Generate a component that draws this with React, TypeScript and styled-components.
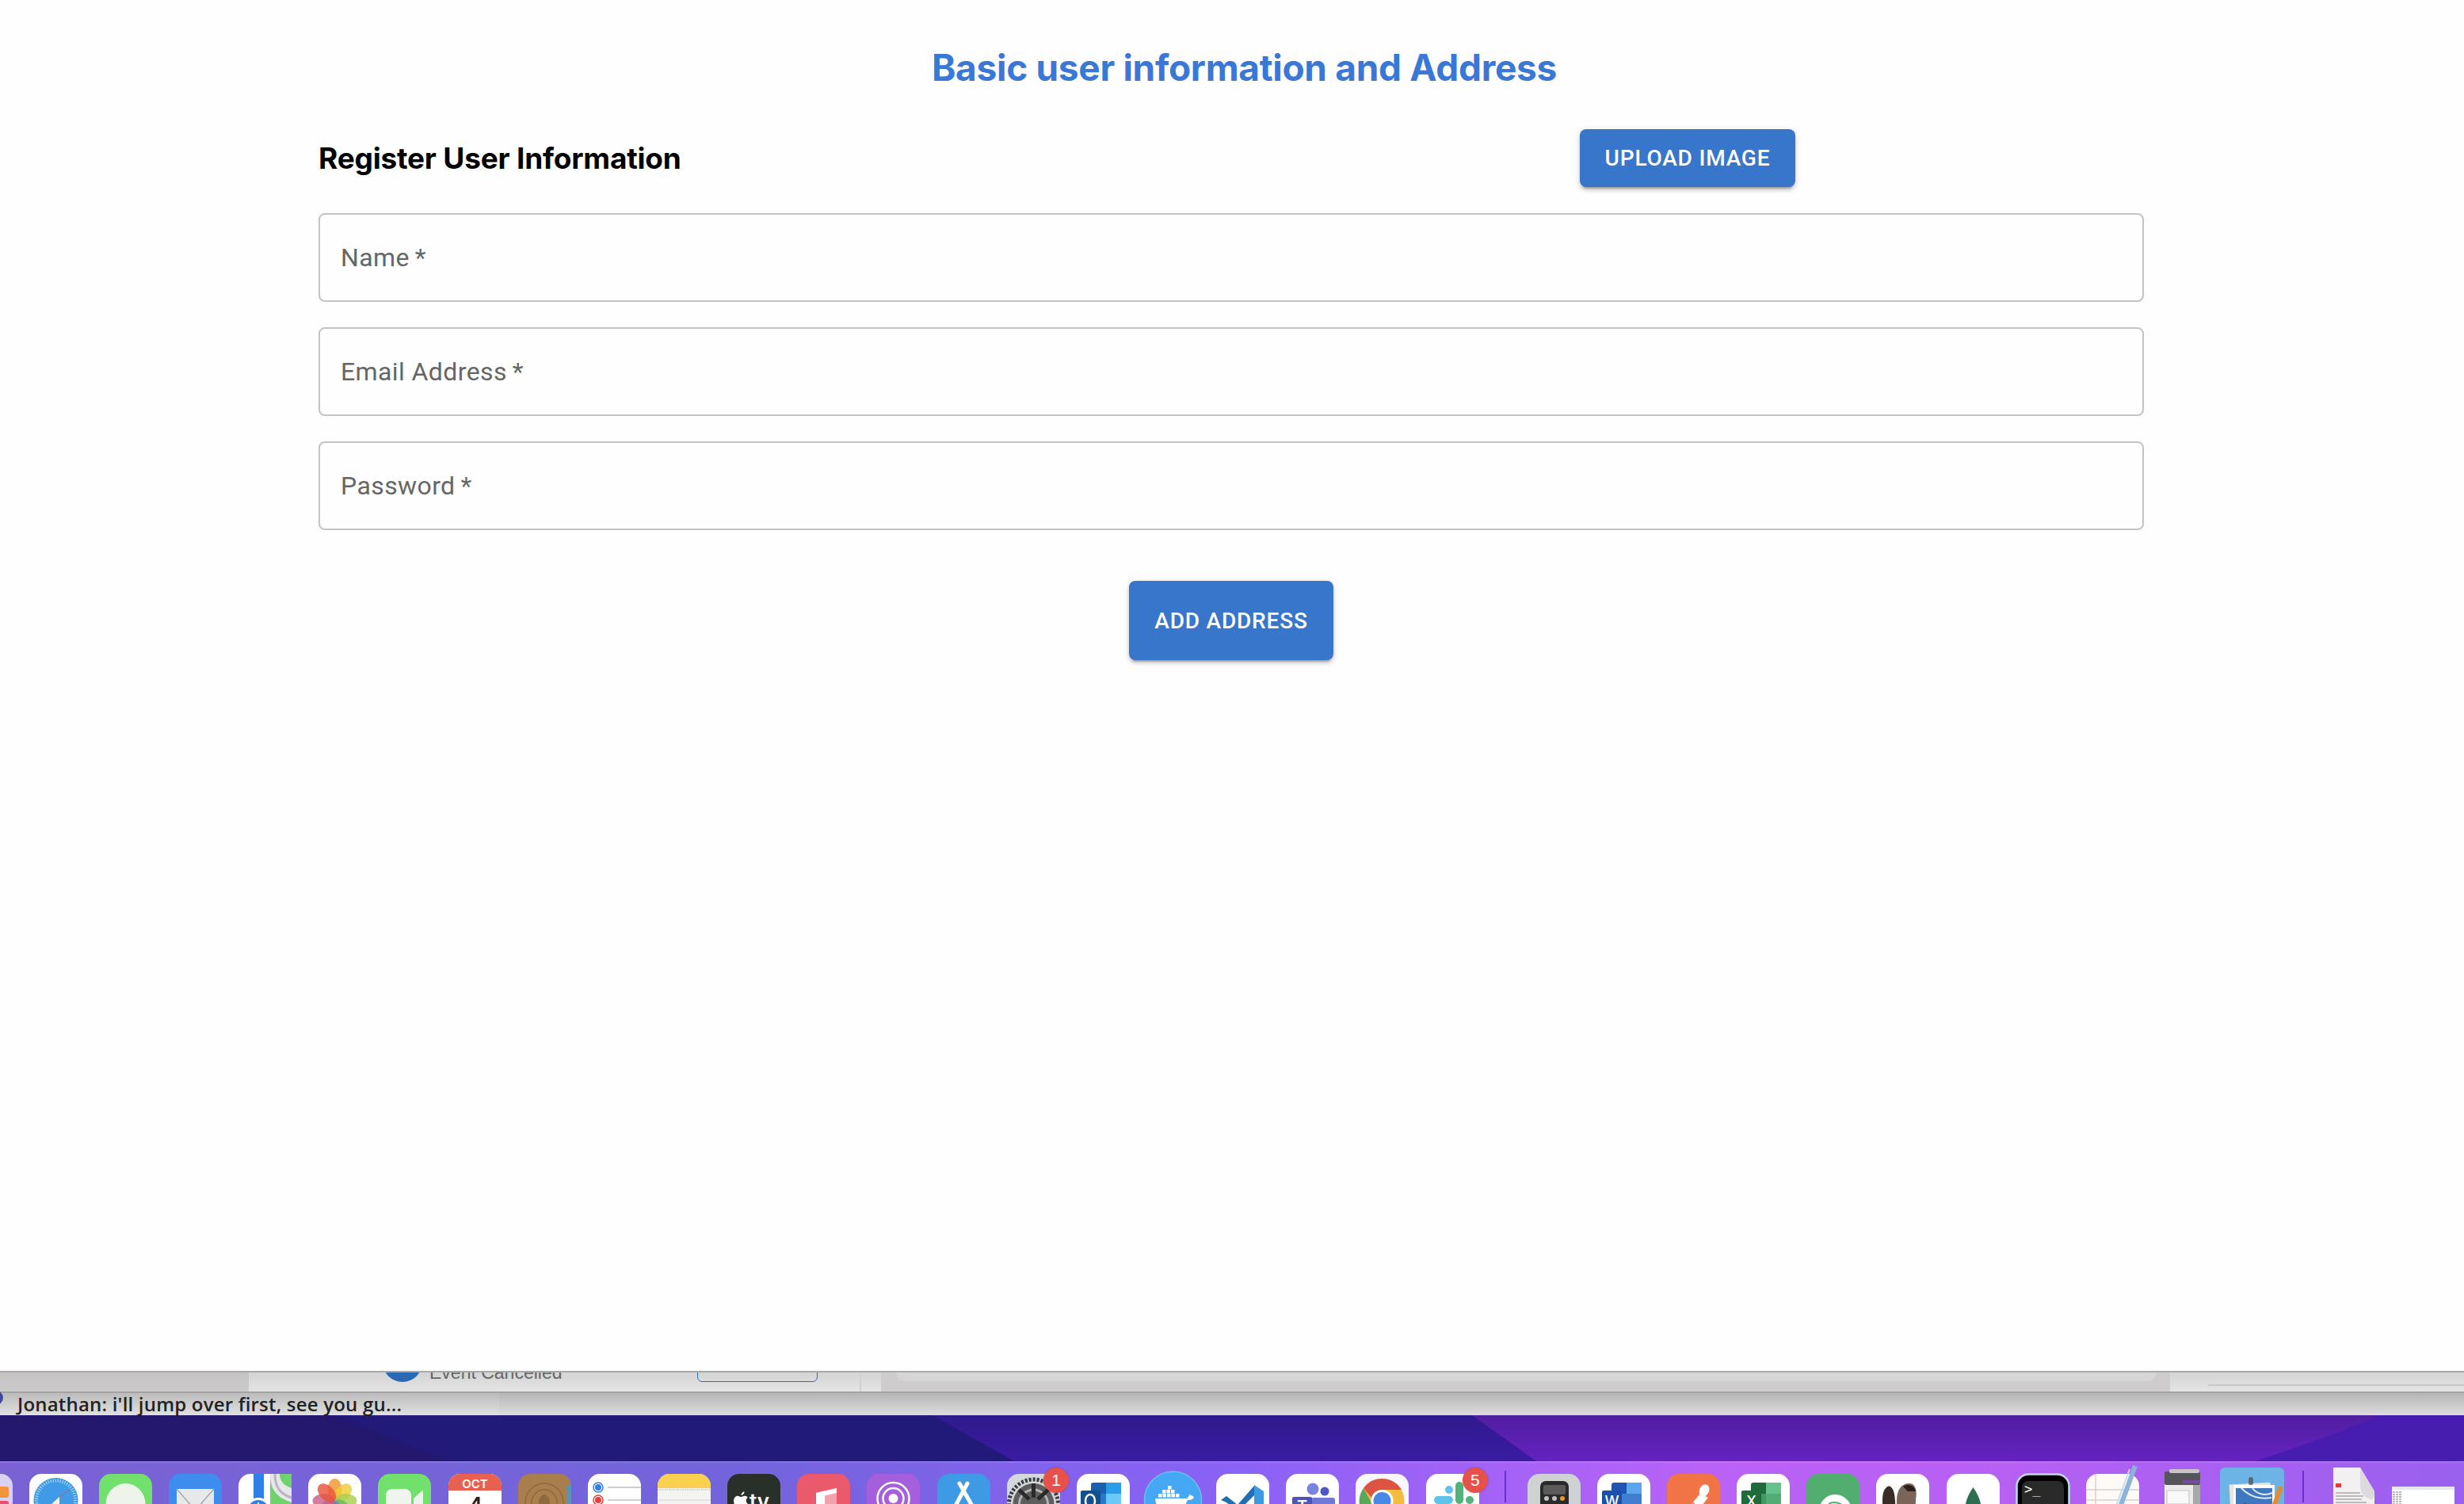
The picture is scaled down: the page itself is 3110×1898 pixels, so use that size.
import React from 'react'
import styled, { createGlobalStyle } from 'styled-components'

const GlobalStyle = createGlobalStyle`
  html, body {
    margin: 0;
    padding: 0;
    background: #fff;
  }
  * {
    box-sizing: border-box;
  }
`

const Page = styled.div`
  width: 3110px;
  height: 1898px;
  overflow: hidden;
  display: flex;
  flex-direction: column;
`

const Main = styled.main`
  height: 1730px;
  flex: none;
  background: #fefefe;
  padding: 57px 404px 0 402px;
`

const Title = styled.h1`
  margin: 0 0 50px;
  padding-left: 33px;
  font: 700 46px/56px Inter, sans-serif;
  letter-spacing: -0.3px;
  color: #3a78d8;
  text-align: center;
`

const HeaderRow = styled.div`
  display: grid;
  grid-template-columns: 1fr 1fr;
  align-items: center;
  margin-bottom: 33px;
`

const SubTitle = styled.h2`
  margin: 0;
  font: 700 37px/44px Inter, sans-serif;
  letter-spacing: -0.2px;
  color: #000;
`

const Button = styled.button<{ $tall?: boolean }>`
  justify-self: center;
  height: ${(p) => (p.$tall ? '100px' : '73px')};
  padding: 0 32px;
  border: 0;
  border-radius: 8px;
  background: #3876cb;
  color: #fff;
  font: 500 28px Roboto, sans-serif;
  letter-spacing: 0.8px;
  text-transform: uppercase;
  box-shadow: 0 6px 2px -4px rgba(0, 0, 0, 0.2), 0 4px 4px 0 rgba(0, 0, 0, 0.14), 0 2px 10px 0 rgba(0, 0, 0, 0.12);
`

const Fields = styled.div`
  display: flex;
  flex-direction: column;
  gap: 32px;
`

const Input = styled.input`
  width: 100%;
  height: 112px;
  padding: 0 26px;
  border: 2px solid #c4c4c4;
  border-radius: 8px;
  background: transparent;
  font: 400 32px Roboto, sans-serif;
  letter-spacing: 0.4px;
  outline: none;

  &::placeholder {
    color: #666;
    opacity: 1;
  }
`

const Actions = styled.div`
  display: flex;
  justify-content: center;
  margin-top: 64px;
`

// what's left of the windows behind the browser
const WindowStrip = styled.div`
  height: 28px;
  flex: none;
  display: flex;
  overflow: hidden;
  border-top: 2px solid #a9a9a9;
  border-bottom: 2px solid #a3a3a3;
`

const StripSide = styled.div`
  width: 314px;
  background: linear-gradient(#c5c2c4, #cdcacc);
`

const EventPane = styled.div`
  position: relative;
  width: 773px;
  background: linear-gradient(#d4d4d4, #e4e4e4);
  border-right: 2px solid #d0d0d0;
`

const EventGutter = styled.div`
  width: 25px;
  background: linear-gradient(#d4d4d4, #e4e4e4);
`

const EventAvatar = styled.span`
  position: absolute;
  left: 169px;
  top: -38px;
  width: 50px;
  height: 50px;
  border-radius: 50%;
  background: #2a6ab5;
`

const EventText = styled.span`
  position: absolute;
  left: 228px;
  top: -15px;
  font: 400 23px/30px 'Liberation Sans', sans-serif;
  color: #666;
`

const EventButton = styled.span`
  position: absolute;
  left: 566px;
  top: -20px;
  width: 152px;
  height: 32px;
  border: 1.5px solid #2f6db5;
  border-radius: 6px;
`

const ListPane = styled.div`
  flex: 1;
  padding: 0 17px 0 19px;
  background: #cfccce;
`

const ListCard = styled.div`
  height: 11px;
  background: #d6d6d6;
  border-radius: 0 0 14px 14px;
`

const DetailPane = styled.div`
  width: 371px;
  padding: 15px 0 0 48px;
  background: linear-gradient(#d4d4d4, #e4e4e4);
`

const DetailLine = styled.div`
  height: 2px;
  background: #c6c6c6;
`

const ChatBar = styled.div`
  position: relative;
  height: 28px;
  flex: none;
  background: linear-gradient(#b6b6b6, #dcdcdc);
`

const ChatMessage = styled.div`
  width: 630px;
  height: 100%;
  padding-left: 22px;
  font: 600 24px/27px 'Open Sans', sans-serif;
  letter-spacing: 0.2px;
  color: #222;
  white-space: nowrap;
  background: linear-gradient(#bcbcbc, #e0e0e0);
`

const ChatAvatar = styled.span`
  position: absolute;
  left: -14px;
  top: -3px;
  width: 18px;
  height: 18px;
  border-radius: 50%;
  background: #3f4a9c;
`

const Wallpaper = styled.svg`
  display: block;
  flex: none;
  width: 3110px;
  height: 58px;
`

const Dock = styled.div`
  height: 54px;
  flex: none;
  display: flex;
  align-items: flex-start;
  padding-top: 14px;
  border-top: 2px solid rgba(255, 255, 255, 0.12);
  background: linear-gradient(90deg, #7a62d4 0%, #7364dc 30%, #8a62f6 50%, #bb62f6 70%, #b860f4 80%, #9a60ee 100%);
`

const DockCell = styled.div<{ $first?: boolean }>`
  position: relative;
  flex: none;
  width: 88.15px;
  margin-left: ${(p) => (p.$first ? '-62px' : '0')};
  display: flex;
  justify-content: center;
`

const Art = styled.svg`
  display: block;
  flex: none;
  width: 67px;
  height: 67px;
  overflow: visible;
`

const Badge = styled.span`
  position: absolute;
  left: 57px;
  top: -8px;
  width: 32px;
  height: 32px;
  border-radius: 50%;
  background: #e8504a;
  box-shadow: 0 0 2px rgba(0, 0, 0, 0.3);
  color: #fff;
  font: 400 21px/32px 'Liberation Sans', sans-serif;
  text-align: center;
`

const Separator = styled.div<{ $shift?: number }>`
  flex: none;
  width: 40px;
  height: 40px;
  margin-top: -4px;
  padding-left: ${(p) => p.$shift ?? 0}px;
  display: flex;
  justify-content: center;

  &::after {
    content: '';
    width: 2px;
    background: #6a2fd0;
  }
`

const Tile = ({ fill, children }: { fill: string; children?: React.ReactNode }) => (
  <Art viewBox="0 0 67 67">
    <rect width="67" height="67" rx="15" fill={fill} />
    {children}
  </Art>
)

const Launchpad = () => (
  <Tile fill="#d9d0f2">
    <rect x="48" y="16" width="14" height="14" rx="3" fill="#f0953c" />
    <rect x="48" y="34" width="14" height="14" rx="3" fill="#e8506e" />
  </Tile>
)

const Safari = () => (
  <Tile fill="#fff">
    <circle cx="33.5" cy="33" r="28" fill="#3f9be8" />
    <circle cx="33.5" cy="33" r="24.5" fill="none" stroke="#bfe0f8" strokeWidth="4" strokeDasharray="1 2" />
    <polygon points="60,13 38,29 29,37" fill="#e5503c" />
    <polygon points="38,29 29,37 18,52 38,38" fill="#f2f2f2" />
  </Tile>
)

const Messages = () => (
  <Tile fill="#72e06d">
    <ellipse cx="33.5" cy="38" rx="25" ry="26" fill="#eef4ea" />
  </Tile>
)

const Mail = () => (
  <Tile fill="#3f8cef">
    <rect x="10" y="19" width="47" height="35" fill="#e6e8ea" />
    <path d="M10 19 L33.5 46 L57 19 M10 54 L27 38 M57 54 L40 38" fill="none" stroke="#a8a8a8" strokeWidth="1.5" />
  </Tile>
)

const Maps = () => (
  <Tile fill="#fff">
    <path d="M40 0 H67 V67 H40 Z" fill="#6fd36c" />
    <path d="M40 0 C40 22 50 30 67 36 V18 C56 14 52 8 52 0 Z" fill="#e8e6ea" />
    <path d="M46 0 C46 18 54 26 67 30" fill="none" stroke="#b9b6c0" strokeWidth="3" />
    <path d="M0 40 H20 V67 H0 Z" fill="#dc98d8" />
    <rect x="19" y="0" width="13" height="36" fill="#2f7fe8" />
    <circle cx="25" cy="46" r="16" fill="#fff" />
    <circle cx="25" cy="46" r="13" fill="#2f7fe8" />
    <polygon points="25,35 33,52 25,48 17,52" fill="#fff" />
  </Tile>
)

const petals = [
  { a: 0, c: '#f0962e' },
  { a: 45, c: '#f0cc3a' },
  { a: 90, c: '#a8cf4c' },
  { a: 135, c: '#6cb86a' },
  { a: 180, c: '#5a8fc4' },
  { a: 225, c: '#8f6cb8' },
  { a: 270, c: '#c9608a' },
  { a: 315, c: '#e8563c' },
]

const Photos = () => (
  <Tile fill="#fff">
    {petals.map((p) => (
      <ellipse
        key={p.a}
        cx="33.5"
        cy="20"
        rx="9"
        ry="14"
        fill={p.c}
        opacity="0.82"
        transform={`rotate(${p.a} 33.5 34)`}
      />
    ))}
  </Tile>
)

const FaceTime = () => (
  <Tile fill="#72e06d">
    <rect x="10" y="19" width="32" height="32" rx="8" fill="#f0f4ee" />
    <polygon points="45,31 57,20 57,50 45,40" fill="#f0f4ee" />
  </Tile>
)

const Calendar = () => (
  <Tile fill="#fff">
    <path d="M0 21 V15 A15 15 0 0 1 15 0 H52 A15 15 0 0 1 67 15 V21 Z" fill="#e8604f" />
    <text x="33.5" y="18" textAnchor="middle" fill="#fff" fontFamily="Inter, sans-serif" fontWeight="600" fontSize="15">
      OCT
    </text>
    <text x="33.5" y="55" textAnchor="middle" fill="#222" fontFamily="Inter, sans-serif" fontSize="36">
      4
    </text>
  </Tile>
)

const Contacts = () => (
  <Tile fill="#a87f4c">
    <rect x="62" y="14" width="5" height="53" fill="#5b93b8" />
    <circle cx="33" cy="36" r="24" fill="none" stroke="#8f6a3c" strokeWidth="1.5" />
    <circle cx="33" cy="36" r="16" fill="none" stroke="#8f6a3c" strokeWidth="1.5" />
    <ellipse cx="33" cy="36" rx="7" ry="10" fill="#8f6a3c" />
  </Tile>
)

const Reminders = () => (
  <Tile fill="#fff">
    <circle cx="13" cy="17" r="6" fill="none" stroke="#2f7fe8" strokeWidth="1.5" />
    <circle cx="13" cy="17" r="4" fill="#2f7fe8" />
    <circle cx="13" cy="33" r="6" fill="none" stroke="#e8403c" strokeWidth="1.5" />
    <circle cx="13" cy="33" r="4" fill="#e8403c" />
    <path d="M25 17 H67 M25 33 H67" stroke="#cfcfcf" strokeWidth="2" />
  </Tile>
)

const Notes = () => (
  <Tile fill="#f4f3f1">
    <path d="M0 18 V15 A15 15 0 0 1 15 0 H52 A15 15 0 0 1 67 15 V18 Z" fill="#fbd04e" />
    <path d="M0 20 H67" stroke="#bdbdbd" strokeWidth="1.5" strokeDasharray="1 1.5" />
    <path d="M0 33 H67" stroke="#dedede" strokeWidth="1.5" />
  </Tile>
)

const AppleTv = () => (
  <Tile fill="#283029">
    <path
      d="M17 29c2 0 3-1.300 5-1.300 1.800 0 3 .800 4 2-3.400 2-2.800 7 .800 8.500-1 2.500-2.600 5.800-4.800 5.800-1.500 0-2-1-4-1s-2.700 1-4 1C11 44 8 38 8 34c0-4 2.600-6.300 5-6.300 1.600 0 2.800 1.300 4 1.300z M17.500 27c-.200-2.500 2-4.500 4-4.700.200 2.500-2 4.800-4 4.700z"
      fill="#fff"
    />
    <text x="28" y="44" fill="#fff" fontFamily="Inter, sans-serif" fontWeight="600" fontSize="26">
      tv
    </text>
  </Tile>
)

const Music = () => (
  <Tile fill="#ea5a6c">
    <polygon points="24,24 50,18 50,67 24,67" fill="#f3a2ac" />
    <polygon points="24,24 35,21.500 35,67 24,67" fill="#fff" />
    <polygon points="24,24 50,18 50,24 24,30" fill="#fff" />
  </Tile>
)

const Podcasts = () => (
  <Tile fill="#a65fdc">
    <circle cx="33.5" cy="31" r="20" fill="none" stroke="#fff" strokeWidth="2.500" />
    <circle cx="33.5" cy="31" r="13" fill="none" stroke="#fff" strokeWidth="2.500" />
    <circle cx="33.5" cy="31" r="6" fill="#fff" />
  </Tile>
)

const AppStore = () => (
  <Tile fill="#3f9ae6">
    <path d="M38 12 L22 42 M28 12 L45 42" stroke="#fff" strokeWidth="5" strokeLinecap="round" fill="none" />
  </Tile>
)

const SystemPrefs = () => (
  <Tile fill="#d2d8dc">
    <circle cx="33.5" cy="38" r="31" fill="none" stroke="#3c3c3c" strokeWidth="5" strokeDasharray="3 2" />
    <circle cx="33.5" cy="38" r="26" fill="#5e5e5e" />
    <circle cx="33.5" cy="38" r="18" fill="none" stroke="#b4b4b4" strokeWidth="3" />
    <path d="M33.5 12 V30 M15 20 L28 32 M52 20 L39 32" stroke="#2a2a2a" strokeWidth="5" />
  </Tile>
)

const OfficeGrid = ({ a, b, c, d }: { a: string; b: string; c: string; d: string }) => (
  <>
    <rect x="18" y="11" width="38" height="56" rx="3" fill={a} />
    <rect x="37" y="11" width="19" height="14" fill={b} />
    <rect x="18" y="25" width="38" height="14" fill={c} />
    <rect x="37" y="25" width="19" height="14" fill={d} />
  </>
)

const Outlook = () => (
  <Tile fill="#fff">
    <OfficeGrid a="#1a5fb0" b="#2a9ce8" c="#2a78cc" d="#6cc8f8" />
    <rect x="5" y="21" width="25" height="46" rx="2" fill="#12508f" />
    <ellipse cx="17" cy="34" rx="6" ry="8" fill="none" stroke="#fff" strokeWidth="2.500" />
  </Tile>
)

const Docker = () => (
  <Art viewBox="0 0 67 67">
    <circle cx="33.5" cy="33" r="36" fill="#44a8f5" stroke="#6cc0f8" strokeWidth="1.500" />
    <path
      d="M27 15h4.500v4.500h-4.500z M20 20h4.500v4.500h-4.500z M25.500 20h4.500v4.500h-4.500z M31 20h4.500v4.500h-4.500z M15 25h4.500v4.500h-4.500z M20.500 25h4.500v4.500h-4.500z M26 25h4.500v4.500h-4.500z M31.500 25h4.500v4.500h-4.500z M37 25h4.500v4.500h-4.500z"
      fill="#fff"
    />
    <path d="M11 31 H50 C52 31 54 28 54 26 C57 27 60 28 60 30 C57 33 55 33 52 33 C48 44 38 50 28 50 C18 50 12 42 11 31 Z" fill="#fff" />
  </Art>
)

const VsCode = () => (
  <Tile fill="#fff">
    <polygon points="6,33 13,28 27,39 48,15 48,27 27,48 13,36" fill="#1f6fb5" />
    <polygon points="8,46 15,38 42,60 48,67 38,67" fill="#1f6fb5" />
    <polygon points="48,14 60,22 60,67 48,67" fill="#3c9be0" />
  </Tile>
)

const Teams = () => (
  <Tile fill="#fff">
    <circle cx="34" cy="19" r="7.500" fill="#7b83de" />
    <circle cx="49" cy="22" r="5.500" fill="#4f57c0" />
    <rect x="32" y="30" width="30" height="37" rx="3" fill="#7078d8" />
    <rect x="8" y="29" width="25" height="38" rx="2" fill="#4b53bc" />
    <text x="20.5" y="48" textAnchor="middle" fill="#fff" fontFamily="Inter, sans-serif" fontWeight="600" fontSize="20">
      T
    </text>
  </Tile>
)

const Chrome = () => (
  <Tile fill="#f8f6ff">
    <circle cx="33.5" cy="34" r="28" fill="#f4bc3e" />
    <path d="M33.5 6 A28 28 0 0 1 58 20 H33.5 A14 14 0 0 0 20 30 L10 18 A28 28 0 0 1 33.5 6 Z" fill="#de5443" />
    <path d="M10 18 L22 40 L28 62 A28 28 0 0 1 10 18 Z" fill="#5aa85c" />
    <circle cx="33.5" cy="34" r="14" fill="#fff" />
    <circle cx="33.5" cy="34" r="11" fill="#4a88e8" />
  </Tile>
)

const Slack = () => (
  <Tile fill="#fff">
    <rect x="24" y="15" width="10" height="10" rx="5" fill="#5cc4ea" />
    <rect x="10" y="28" width="24" height="10" rx="5" fill="#5cc4ea" />
    <rect x="37" y="10" width="10" height="28" rx="5" fill="#52b27a" />
    <rect x="50" y="28" width="10" height="10" rx="5" fill="#52b27a" />
    <rect x="10" y="42" width="10" height="10" rx="5" fill="#d0245c" />
    <rect x="24" y="42" width="10" height="25" rx="5" fill="#d0245c" />
    <rect x="37" y="42" width="24" height="10" rx="5" fill="#e8b040" />
  </Tile>
)

const Calculator = () => (
  <Tile fill="#cfd2d2">
    <rect x="16" y="9" width="36" height="58" rx="7" fill="#2a2a2a" />
    <rect x="20" y="14" width="28" height="12" rx="2" fill="#5a5a5a" />
    <circle cx="24" cy="31" r="3" fill="#c0c0c0" />
    <circle cx="34" cy="31" r="3" fill="#c0c0c0" />
    <circle cx="44" cy="31" r="3" fill="#f0942c" />
  </Tile>
)

const Word = () => (
  <Tile fill="#fff">
    <OfficeGrid a="#1f55b0" b="#5aa6ec" c="#3f7ed0" d="#3f7ed0" />
    <rect x="6" y="21" width="25" height="46" rx="2" fill="#1a50ac" />
    <text x="18.5" y="41" textAnchor="middle" fill="#fff" fontFamily="Inter, sans-serif" fontWeight="500" fontSize="18">
      W
    </text>
  </Tile>
)

const Postman = () => (
  <Tile fill="#f07446">
    <ellipse cx="47" cy="21" rx="6" ry="8" fill="#fff" transform="rotate(25 47 21)" />
    <path d="M42 25 L52 30 L36 50 L24 46 Z" fill="#fff" />
    <path d="M24 46 L16 54 M30 46 L22 60 M37 40 L27 32" stroke="#f07446" strokeWidth="1.500" />
    <path d="M24 46 L14 58 L30 52 Z" fill="#fff" />
  </Tile>
)

const Excel = () => (
  <Tile fill="#fff">
    <OfficeGrid a="#1f6b3c" b="#66c28c" c="#3f9a62" d="#52ad74" />
    <rect x="6" y="21" width="25" height="46" rx="2" fill="#1f6b3c" />
    <text x="18.5" y="41" textAnchor="middle" fill="#fff" fontFamily="Inter, sans-serif" fontWeight="500" fontSize="18">
      X
    </text>
  </Tile>
)

const Workbench = () => (
  <Tile fill="#52ad70">
    <path d="M12 67 C12 40 22 26 36 26 C48 26 58 36 58 50 V67 Z" fill="#fff" />
    <path d="M28 38 C34 34 44 36 50 44 M32 44 C34 40 38 40 42 44" fill="none" stroke="#52ad70" strokeWidth="2" />
  </Tile>
)

const DBeaver = () => (
  <Tile fill="#fff">
    <path d="M8 32 C8 20 14 14 18 16 C24 20 25 32 24 67 H12 C9 55 8 45 8 32 Z" fill="#3a2c26" />
    <path d="M26 34 C26 20 32 12 42 12 C50 12 52 22 50 32 C50 45 48 55 44 67 H26 Z" fill="#7a6558" />
    <path d="M34 16 C40 12 48 14 50 22 L40 22 Z" fill="#2a201c" />
    <circle cx="48" cy="64" r="6" fill="#4a9ca8" />
  </Tile>
)

const Mongo = () => (
  <Tile fill="#fff">
    <path d="M33.5 17 C40 26 44 36 44 48 C44 58 37 62 33.5 67 C30 62 23 58 23 48 C23 36 27 26 33.5 17 Z" fill="#2f6e50" />
  </Tile>
)

const Terminal = () => (
  <Art viewBox="0 0 67 67">
    <rect x="0.5" y="0.5" width="66" height="66" rx="15" fill="#000" stroke="#b8dcee" strokeWidth="2.500" />
    <rect x="7" y="9" width="53" height="58" rx="8" fill="#2a2a2a" />
    <text x="10" y="25" fill="#fff" fontFamily="'DejaVu Sans Mono', monospace" fontSize="17">
      &gt;_
    </text>
  </Art>
)

const TextEdit = () => (
  <Art viewBox="0 0 67 67">
    <rect width="67" height="67" rx="15" fill="#fdfaf8" />
    <path d="M0 20 H67 M0 33 H67 M0 46 H67" stroke="#d4d0ce" strokeWidth="1.500" />
    <path d="M12 0 V67" stroke="#eeb0a8" strokeWidth="1" />
    <path d="M62 -10 L40 50" stroke="#8ab4d8" strokeWidth="6" />
    <path d="M55 -6 L36 46" stroke="#c8dcec" strokeWidth="2" />
  </Art>
)

const Printer = () => (
  <Art viewBox="0 0 67 67">
    <rect x="11" y="13" width="45" height="54" fill="#eceaea" />
    <rect x="47" y="13" width="9" height="54" fill="#a8a8ac" />
    <rect x="11" y="-3" width="45" height="17" rx="2" fill="#54565c" />
    <rect x="17" y="-6" width="38" height="5" rx="2" fill="#c6c6c8" />
    <rect x="34" y="8" width="22" height="4" fill="#7a4aa8" />
    <rect x="14" y="21" width="28" height="17" fill="#f8f8f8" stroke="#c4c4c4" />
  </Art>
)

const Preview = () => (
  <Art viewBox="0 0 67 67">
    <rect x="-7" y="-8" width="81" height="75" rx="6" fill="#6cb4e6" />
    <rect x="6" y="12" width="52" height="55" fill="#e8e4da" transform="rotate(-3 32 40)" />
    <rect x="10" y="14" width="52" height="53" fill="#fff" />
    <rect x="13" y="18" width="46" height="49" fill="#3f78c0" />
    <path d="M20 18 C32 30 44 32 58 30 M34 18 C40 26 50 28 59 24" stroke="#dcecf8" strokeWidth="2" fill="none" />
    <path d="M13 50 L24 36 L38 44 V67 H13 Z" fill="#425f82" />
    <rect x="29" y="4" width="6" height="10" rx="3" fill="#5a6a78" />
    <path d="M70 16 L52 67" stroke="#e08c30" strokeWidth="6" />
  </Art>
)

const PdfDocument = () => (
  <Art viewBox="0 0 67 67">
    <path d="M8 -8 H42 L60 22 V67 H8 Z" fill="#f2f0f0" />
    <path d="M42 -8 L60 22 C60 30 58 32 56 32 C48 30 42 26 42 14 Z" fill="#dcdadc" />
    <rect x="11" y="12" width="7" height="5" fill="#d8403c" />
    <path d="M11 24 H42 M11 28 H46 M11 32 H44 M11 36 H50 M11 40 H50 M11 48 H30 M15 54 H50 M15 58 H50 M15 62 H50" stroke="#a8a8a8" strokeWidth="1.500" />
  </Art>
)

const Screenshot = () => (
  <Art viewBox="0 0 67 67">
    <rect x="-6" y="16" width="79" height="51" fill="#fff" />
    <rect x="-6" y="16" width="79" height="4" fill="#e8e8ea" />
    <path d="M-5 23 H6 M-5 26 H6 M-5 29 H6 M-5 32 H6 M-5 35 H6 M-5 38 H6" stroke="#a4a4a8" strokeWidth="1.500" strokeDasharray="3 1" />
  </Art>
)

type DockEntry = { name: string; art: React.FC; badge?: number }

const mainApps: DockEntry[] = [
  { name: 'launchpad', art: Launchpad },
  { name: 'safari', art: Safari },
  { name: 'messages', art: Messages },
  { name: 'mail', art: Mail },
  { name: 'maps', art: Maps },
  { name: 'photos', art: Photos },
  { name: 'facetime', art: FaceTime },
  { name: 'calendar', art: Calendar },
  { name: 'contacts', art: Contacts },
  { name: 'reminders', art: Reminders },
  { name: 'notes', art: Notes },
  { name: 'tv', art: AppleTv },
  { name: 'music', art: Music },
  { name: 'podcasts', art: Podcasts },
  { name: 'appstore', art: AppStore },
  { name: 'prefs', art: SystemPrefs, badge: 1 },
  { name: 'outlook', art: Outlook },
  { name: 'docker', art: Docker },
  { name: 'vscode', art: VsCode },
  { name: 'teams', art: Teams },
  { name: 'chrome', art: Chrome },
  { name: 'slack', art: Slack, badge: 5 },
]

const otherApps: DockEntry[] = [
  { name: 'calculator', art: Calculator },
  { name: 'word', art: Word },
  { name: 'postman', art: Postman },
  { name: 'excel', art: Excel },
  { name: 'workbench', art: Workbench },
  { name: 'dbeaver', art: DBeaver },
  { name: 'mongo', art: Mongo },
  { name: 'terminal', art: Terminal },
  { name: 'textedit', art: TextEdit },
  { name: 'printer', art: Printer },
  { name: 'preview', art: Preview },
]

const recentFiles: DockEntry[] = [
  { name: 'document', art: PdfDocument },
  { name: 'screenshot', art: Screenshot },
]

const renderCells = (entries: DockEntry[], firstOffset = false) =>
  entries.map((entry, i) => (
    <DockCell key={entry.name} $first={firstOffset && i === 0}>
      <entry.art />
      {entry.badge ? <Badge>{entry.badge}</Badge> : null}
    </DockCell>
  ))

export default function App() {
  return (
    <Page>
      <GlobalStyle />
      <Main>
        <Title>Basic user information and Address</Title>
        <HeaderRow>
          <SubTitle>Register User Information</SubTitle>
          <Button>Upload Image</Button>
        </HeaderRow>
        <Fields>
          <Input placeholder={'Name\u2009*'} />
          <Input placeholder={'Email Address\u2009*'} />
          <Input placeholder={'Password\u2009*'} />
        </Fields>
        <Actions>
          <Button $tall>Add Address</Button>
        </Actions>
      </Main>
      <WindowStrip>
        <StripSide />
        <EventPane>
          <EventAvatar />
          <EventText>Event Cancelled</EventText>
          <EventButton />
        </EventPane>
        <EventGutter />
        <ListPane>
          <ListCard />
        </ListPane>
        <DetailPane>
          <DetailLine />
        </DetailPane>
      </WindowStrip>
      <ChatBar>
        <ChatAvatar />
        <ChatMessage>Jonathan: i'll jump over first, see you gu...</ChatMessage>
      </ChatBar>
      <Wallpaper viewBox="0 0 3110 58" preserveAspectRatio="none">
        <defs>
          <linearGradient id="violet" x1="0" y1="0" x2="0" y2="1">
            <stop offset="0" stopColor="#4f1ea0" />
            <stop offset="1" stopColor="#6622c0" />
          </linearGradient>
          <linearGradient id="indigo" x1="0" y1="0" x2="0" y2="1">
            <stop offset="0" stopColor="#2f1a8c" />
            <stop offset="1" stopColor="#3a1ba4" />
          </linearGradient>
        </defs>
        <rect width="3110" height="58" fill="#24176e" />
        <polygon points="423,0 1177,0 1280,58 566,58" fill="#211a78" />
        <polygon points="1177,0 1858,0 1939,58 1280,58" fill="url(#indigo)" />
        <polygon points="1858,0 3110,0 3110,58 1939,58" fill="url(#violet)" />
        <path d="M2846 58 C2900 40 2960 20 3004 0 H3110 V58 Z" fill="#471db0" />
      </Wallpaper>
      <Dock>
        {renderCells(mainApps, true)}
        <Separator $shift={6} />
        {renderCells(otherApps)}
        <Separator />
        {renderCells(recentFiles)}
      </Dock>
    </Page>
  )
}
